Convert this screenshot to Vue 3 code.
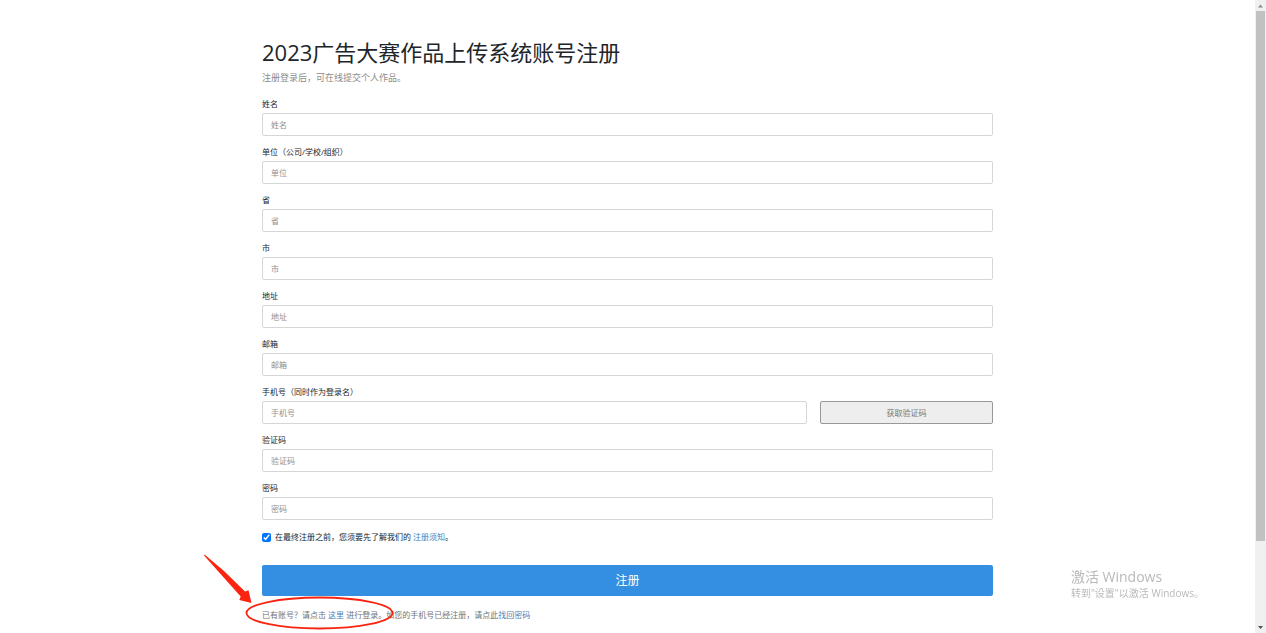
<script setup>
import { ref } from 'vue'

const fields = [
  { id: 'name', label: '姓名', hint: '姓名' },
  { id: 'company', label: '单位（公司/学校/组织）', hint: '单位' },
  { id: 'province', label: '省', hint: '省' },
  { id: 'city', label: '市', hint: '市' },
  { id: 'address', label: '地址', hint: '地址' },
  { id: 'email', label: '邮箱', hint: '邮箱' },
  { id: 'phone', label: '手机号（同时作为登录名）', hint: '手机号', verify: true },
  { id: 'code', label: '验证码', hint: '验证码' },
  { id: 'password', label: '密码', hint: '密码', type: 'password' },
]
const agreed = ref(true)
</script>

<template>
  <div class="page">
    <main class="content">
      <form class="form" @submit.prevent>
        <h1>2023广告大赛作品上传系统账号注册</h1>
        <p class="intro">注册登录后，可在线提交个人作品。</p>

        <div v-for="f in fields" :key="f.id" class="field">
          <label :for="f.id">{{ f.label }}</label>
          <div class="row">
            <input :id="f.id" class="text" :type="f.type || 'text'" :placeholder="f.hint" />
            <button v-if="f.verify" type="button" class="verify">获取验证码</button>
          </div>
        </div>

        <div class="agree">
          <input id="agree" v-model="agreed" type="checkbox" />
          <label for="agree">在最终注册之前，您须要先了解我们的 <a href="#">注册须知</a>。</label>
        </div>

        <button type="submit" class="submit">注册</button>

        <p class="login">
          已有账号？请点击 <a href="#">这里</a> 进行登录。如您的手机号已经注册，请点此<a href="#">找回密码</a>
          <svg class="mark" width="200" height="84" viewBox="0 0 200 84" aria-hidden="true">
            <ellipse cx="119.500" cy="63" rx="73" ry="15.500" fill="none" stroke="#f8240f" stroke-width="1.800" />
            <path d="M3.800 5.300 L4.800 4.800 L24 21 L45 41.500 L48.500 40.300 L51.500 53 L39.300 50 L40.700 46.500 L21 24.500 Z" fill="#fb2410" />
          </svg>
        </p>
      </form>
    </main>

    <aside class="activate">
      <div class="activate-title">激活 Windows</div>
      <div>转到"设置"以激活 Windows。</div>
    </aside>

    <div class="scrollbar" aria-hidden="true">
      <svg width="11" height="11" viewBox="0 0 11 11"><path d="M3 7.500h5L5.500 4.500z" fill="#8a8a8a" /></svg>
      <div class="track"><div class="thumb"></div></div>
      <svg width="11" height="11" viewBox="0 0 11 11"><path d="M3 4h5L5.500 7z" fill="#505050" /></svg>
    </div>
  </div>
</template>

<style>
body {
  margin: 0;
  background: #fff;
}
</style>

<style scoped>
.page {
  display: flex;
  min-height: 100vh;
  box-sizing: border-box;
  padding-right: 11px;
  font-family: "Open Sans", "Noto Sans CJK SC", sans-serif;
  font-size: 8px;
  line-height: 12px;
  color: #212529;
}
.content {
  flex: 1;
  padding: 36px 16px 0;
}
.form {
  max-width: 731px;
  margin: 0 auto;
}
h1 {
  margin: 0 0 2px;
  font-size: 22px;
  line-height: 32px;
  font-weight: 400;
}
.intro {
  margin: 0 0 12px;
  font-size: 9px;
  line-height: 16px;
  color: #8b8b8b;
}
.field {
  margin-bottom: 12px;
}
.field label {
  display: block;
}
.row {
  display: flex;
  gap: 13px;
  padding-top: 3px;
  margin-bottom: -2px;
}
.text {
  flex: 1;
  min-width: 0;
  height: 23px;
  box-sizing: border-box;
  padding: 0 8px;
  border: 1px solid #d6d6d6;
  border-radius: 2px;
  background: #fff;
  font: inherit;
  color: #495057;
  outline: 0;
}
.text::placeholder {
  color: #8f8f8f;
  opacity: 1;
}
.verify {
  width: 173px;
  height: 23px;
  padding: 0;
  border: 1px solid #989898;
  border-radius: 2px;
  background: #eee;
  font: inherit;
  color: #777;
}
.agree {
  display: flex;
  align-items: center;
  gap: 4px;
  padding-top: 1px;
}
.agree input {
  width: 9px;
  height: 9px;
  margin: 1px 0 0;
  accent-color: #0075ff;
}
a {
  color: #4a7eb8;
  text-decoration: none;
}
.submit {
  display: block;
  width: 100%;
  height: 31px;
  margin: 22px 0 13px;
  padding: 0;
  border: 0;
  border-radius: 2px;
  background: #348fe2;
  color: #fff;
  font: inherit;
  font-size: 12px;
}
.login {
  position: relative;
  margin: 0;
  color: #707478;
}
.mark {
  position: absolute;
  left: -62px;
  top: -59px;
  pointer-events: none;
}
.activate {
  position: fixed;
  right: 62px;
  bottom: 32px;
  color: #b9b9b9;
  font-size: 10px;
  line-height: 15px;
}
.activate-title {
  font-size: 14px;
  line-height: 18px;
}
.scrollbar {
  position: fixed;
  top: 0;
  right: 0;
  bottom: 0;
  width: 11px;
  display: flex;
  flex-direction: column;
  background: #f0f0f0;
}
.scrollbar svg {
  display: block;
  flex: none;
}
.track {
  flex: 1;
  padding: 0 1px;
}
.thumb {
  height: 530px;
  background: #c1c1c1;
}
</style>
